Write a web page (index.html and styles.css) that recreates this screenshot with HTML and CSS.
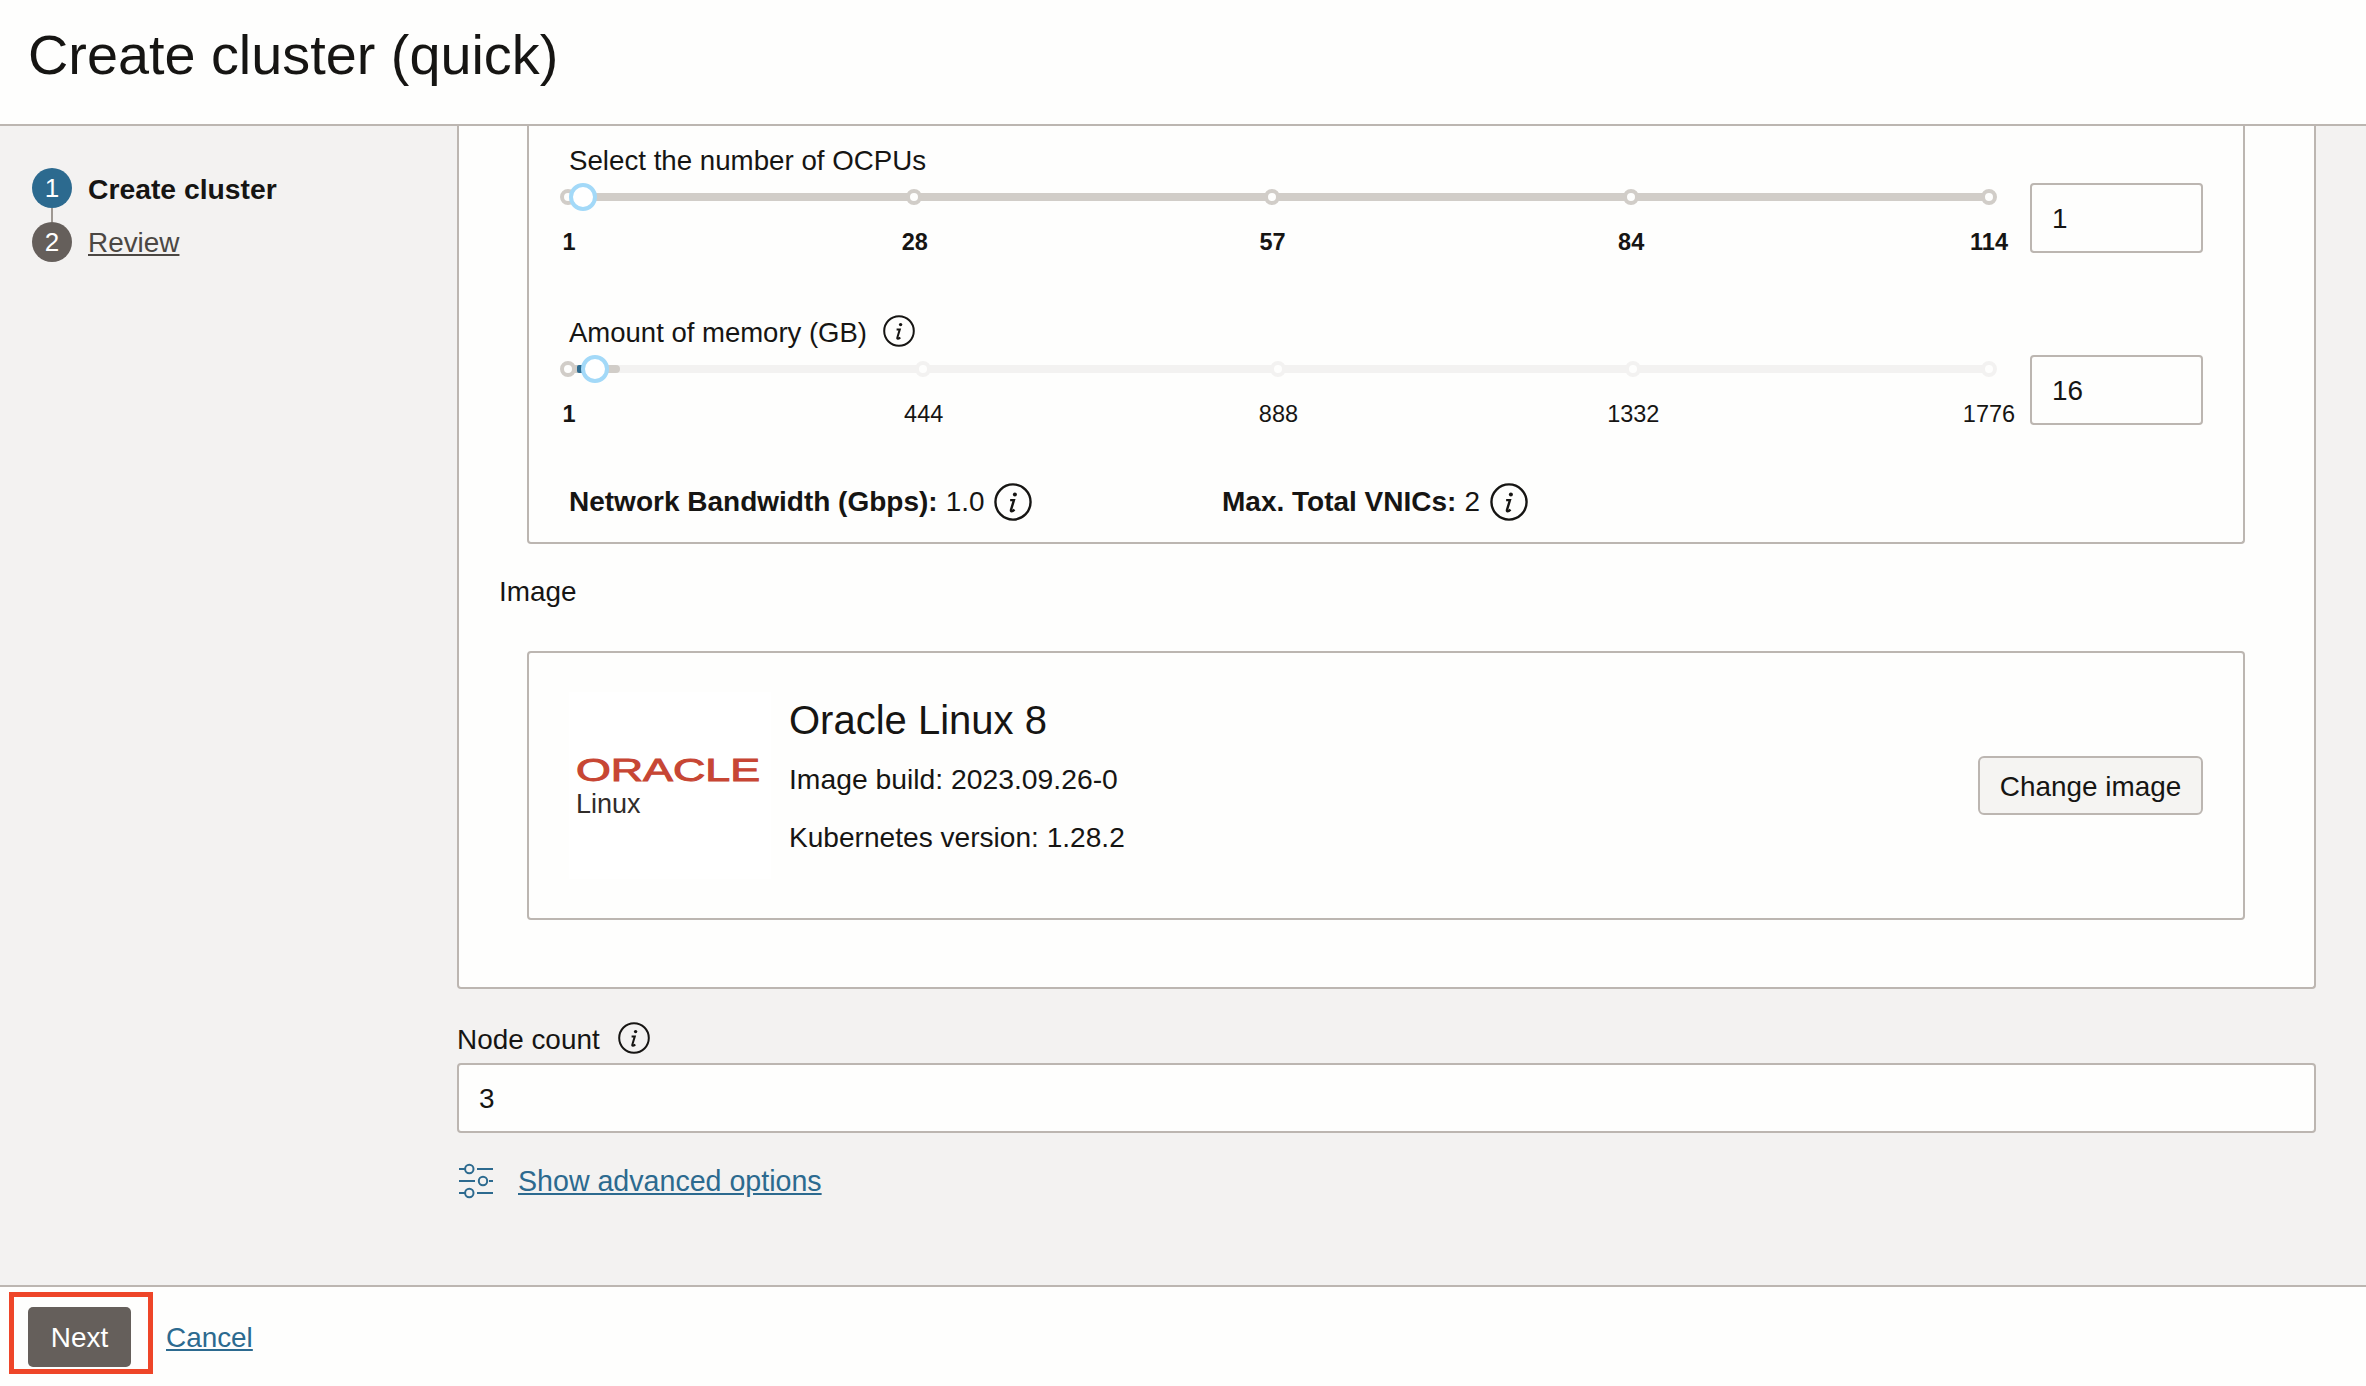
FILE: index.html
```html
<!DOCTYPE html>
<html lang="en">
<head>
  <meta charset="UTF-8">
  <meta name="viewport" content="width=device-width, initial-scale=1.0">
  <title>Create cluster (quick)</title>
  <link rel="stylesheet" href="styles.css">
</head>
<body>
  <svg class="icon-defs" aria-hidden="true">
    <symbol id="info" viewBox="0 0 32 32">
      <circle cx="16" cy="16" r="14.8" fill="none" stroke="currentColor" stroke-width="2"/>
      <circle cx="17.6" cy="9.6" r="1.7" fill="currentColor"/>
      <path d="M13.6 14.4h3.2l-2.5 8.3c-.4 1.4.9 1.6 3-.3" fill="none" stroke="currentColor" stroke-width="2"/>
    </symbol>
  </svg>

  <header class="page-header">
    <h1>Create cluster (quick)</h1>
  </header>

  <div class="page-body">
    <nav class="steps">
      <div class="step current">
        <span class="step-num">1</span>
        <span class="step-label">Create cluster</span>
      </div>
      <div class="step-line"></div>
      <div class="step">
        <span class="step-num">2</span>
        <a class="step-label" href="#">Review</a>
      </div>
    </nav>

    <main class="content">
      <section class="outer-panel">
        <div class="shape-panel">
          <div class="slider-row">
            <div>
              <div class="field-label">Select the number of OCPUs</div>
              <div class="track">
                <span class="dot" style="left: 0"></span>
                <span class="dot" style="left: 24.35%"></span>
                <span class="dot" style="left: 49.54%"></span>
                <span class="dot" style="left: 74.8%"></span>
                <span class="dot" style="left: 100%"></span>
                <span class="thumb" style="left: 1.06%"></span>
              </div>
              <div class="ticks">
                <span class="tick strong" style="left: 0">1</span>
                <span class="tick strong" style="left: 24.35%">28</span>
                <span class="tick strong" style="left: 49.54%">57</span>
                <span class="tick strong" style="left: 74.8%">84</span>
                <span class="tick strong" style="left: 100%">114</span>
              </div>
            </div>
            <input class="text-input num-input" value="1">
          </div>

          <div class="slider-row">
            <div>
              <div class="field-label memory-label">Amount of memory (GB) <svg class="info"><use href="#info"/></svg></div>
              <div class="track light">
                <span class="fill" style="width: 3.66%"></span>
                <span class="sliver"></span>
                <span class="dot on" style="left: 0"></span>
                <span class="dot" style="left: 24.98%"></span>
                <span class="dot" style="left: 49.96%"></span>
                <span class="dot" style="left: 74.95%"></span>
                <span class="dot" style="left: 100%"></span>
                <span class="thumb" style="left: 1.9%"></span>
              </div>
              <div class="ticks">
                <span class="tick strong" style="left: 0">1</span>
                <span class="tick" style="left: 24.98%">444</span>
                <span class="tick" style="left: 49.96%">888</span>
                <span class="tick" style="left: 74.95%">1332</span>
                <span class="tick" style="left: 100%">1776</span>
              </div>
            </div>
            <input class="text-input num-input" value="16">
          </div>

          <div class="stats">
            <div class="stat stat-first"><strong>Network Bandwidth (Gbps):</strong> 1.0 <svg class="info big"><use href="#info"/></svg></div>
            <div class="stat"><strong>Max. Total VNICs:</strong> 2 <svg class="info big"><use href="#info"/></svg></div>
          </div>
        </div>

        <div class="image-label">Image</div>

        <div class="image-panel">
          <div class="logo-box">
            <svg class="oracle-logo" viewBox="0 0 184 24">
              <text x="0" y="23.5" font-size="32" textLength="184" lengthAdjust="spacingAndGlyphs">ORACLE</text>
            </svg>
            <div class="logo-sub">Linux</div>
          </div>
          <div class="image-info">
            <div class="image-name">Oracle Linux 8</div>
            <div class="image-build">Image build: 2023.09.26-0</div>
            <div class="image-k8s">Kubernetes version: 1.28.2</div>
          </div>
          <button class="btn-secondary">Change image</button>
        </div>
      </section>

      <div class="field-label node-label">Node count <svg class="info"><use href="#info"/></svg></div>
      <input class="text-input wide-input" value="3">

      <div class="advanced">
        <svg class="sliders-icon" viewBox="9 13 34 36">
          <g fill="none" stroke="currentColor" stroke-width="2">
            <path d="M9 19h6M27 19h16M9 31h16M39 31h4M9 43h6M27 43h16"/>
            <circle cx="19.3" cy="19" r="4.2"/>
            <circle cx="33" cy="31" r="4.2"/>
            <circle cx="19.3" cy="43" r="4.2"/>
          </g>
        </svg>
        <a href="#">Show advanced options</a>
      </div>
    </main>
  </div>

  <footer class="page-footer">
    <button class="btn-primary">Next</button>
    <a class="cancel" href="#">Cancel</a>
    <div class="highlight"></div>
  </footer>
</body>
</html>
```

FILE: styles.css
```css
body {
  margin: 0;
  height: 1386px;
  overflow: hidden;
  display: flex;
  flex-direction: column;
  font-family: "Liberation Sans", Arial, sans-serif;
  font-size: 27.9px;
  line-height: 32px;
  color: #161513;
  background: #fefefd;
}
a {
  color: #2c6a8f;
}
.icon-defs {
  display: none;
}

/* header */
.page-header {
  height: 124px;
  flex: none;
  padding-left: 28px;
  border-bottom: 2px solid #bcb6b1;
}
h1 {
  margin: 0;
  font-size: 55.8px;
  font-weight: 400;
  line-height: 110px;
}

/* layout */
.page-body {
  flex: 1;
  display: flex;
  min-height: 0;
  background: #f3f2f1;
}
.steps {
  width: 457px;
  flex: none;
  box-sizing: border-box;
  padding: 42px 0 0 32px;
}
.step {
  display: flex;
  align-items: center;
  height: 40px;
}
.step-num {
  width: 40px;
  height: 40px;
  margin-right: 16px;
  border-radius: 50%;
  background: #655f5b;
  color: #fff;
  font-size: 26px;
  line-height: 40px;
  text-align: center;
}
.current .step-num {
  background: #2c6a8f;
}
.current .step-label {
  font-size: 28.3px;
  font-weight: 700;
}
.step-label {
  padding-top: 1px;
  color: #161513;
}
a.step-label {
  color: #4b4743;
}
.step-line {
  width: 2px;
  height: 14px;
  margin-left: 19px;
  background: #9e9892;
}
.content {
  flex: 1;
  padding-right: 50px;
  min-width: 0;
}

/* panels */
.outer-panel {
  height: 863px;
  box-sizing: border-box;
  padding: 0 69px 0 68px;
  background: #fefefd;
  border: 2px solid #bcb6b1;
  border-top: 0;
  border-radius: 0 0 4px 4px;
}
.shape-panel {
  height: 418px;
  box-sizing: border-box;
  padding: 17px 41px 0 39px;
  border: 2px solid #bcb6b1;
  border-top: 0;
  border-radius: 0 0 4px 4px;
}
.slider-row {
  display: grid;
  grid-template-columns: 1421px 173px;
  column-gap: 41px;
  height: 172px;
}
.field-label {
  display: flex;
  align-items: center;
  gap: 18px;
  height: 34px;
  margin-bottom: -2px;
  padding-left: 1px;
  box-sizing: border-box;
  padding-top: 1px;
  font-size: 27.7px;
}
.memory-label {
  gap: 16px;
  font-size: 27.5px;
}
.node-label {
  padding-left: 0;
  padding-top: 2px;
  font-size: 27.9px;
}
.info {
  width: 32px;
  height: 32px;
  flex: none;
  margin-top: -4px;
}
.info.big {
  width: 38px;
  height: 38px;
  margin: 0;
}

/* slider */
.track {
  position: relative;
  height: 8px;
  margin-top: 18px;
  background: #d1cdc8;
}
.track.light {
  background: #f3f2f1;
}
.fill {
  position: absolute;
  left: 0;
  top: 0;
  height: 8px;
  border-radius: 0 4px 4px 0;
  background: #d1cdc8;
}
.sliver {
  position: absolute;
  left: 9px;
  top: 0;
  width: 14px;
  height: 8px;
  border-radius: 2px 0 0 2px;
  background: #2c6a8f;
}
.dot {
  position: absolute;
  top: 50%;
  width: 16px;
  height: 16px;
  box-sizing: border-box;
  border: 4px solid #d1cdc8;
  border-radius: 50%;
  background: #fefefd;
  transform: translate(-50%, -50%);
}
.light .dot {
  border-color: #f3f2f1;
}
.light .dot.on {
  border-color: #d1cdc8;
}
.thumb {
  position: absolute;
  top: 50%;
  width: 28px;
  height: 28px;
  box-sizing: border-box;
  border: 4px solid #a3d9f8;
  border-radius: 50%;
  background: #fff;
  transform: translate(-50%, -50%);
}
.ticks {
  position: relative;
  height: 30px;
  margin: 26px 0 0 1px;
}
.tick {
  position: absolute;
  top: 0;
  font-size: 23.5px;
  line-height: 30px;
  transform: translateX(-50%);
}
.tick.strong {
  font-weight: 700;
}

/* inputs */
.text-input {
  display: block;
  box-sizing: border-box;
  height: 70px;
  padding: 2px 20px 0;
  background: #fefefd;
  border: 2px solid #bcb6b1;
  border-radius: 4px;
  font: inherit;
  color: inherit;
}
.num-input {
  width: 173px;
  margin-top: 40px;
}
.wide-input {
  width: 100%;
  margin-top: 9px;
}

.stats {
  display: flex;
  align-items: center;
  height: 38px;
  margin: -4px 0 0 1px;
}
.stat {
  display: flex;
  align-items: center;
  gap: 8px;
}
.stat-first {
  width: 653px;
}
.stat strong {
  font-size: 28px;
}
.stat .info {
  margin-left: 2px;
}

/* image */
.image-label {
  margin: 32px 0 43px -28px;
}
.image-panel {
  display: flex;
  align-items: center;
  height: 269px;
  box-sizing: border-box;
  padding: 0 40px 0 40px;
  border: 2px solid #bcb6b1;
  border-radius: 4px;
}
.logo-box {
  width: 202px;
  height: 187px;
  flex: none;
  box-sizing: border-box;
  margin-right: 18px;
  padding: 65px 0 0 7px;
  background: #fff;
}
.oracle-logo {
  display: block;
  width: 184px;
  height: 24px;
  overflow: visible;
  fill: #c74634;
  stroke: #c74634;
  stroke-width: 1;
}
.logo-sub {
  margin-top: 7px;
  font-size: 27px;
  color: #312d2a;
}
.image-info {
  flex: 1;
  margin-bottom: 20px;
}
.image-name {
  font-size: 40px;
  line-height: 44px;
}
.image-build {
  margin-top: 21px;
  font-size: 28.3px;
}
.image-k8s {
  margin-top: 27px;
  font-size: 28.1px;
}
.btn-secondary {
  width: 225px;
  height: 59px;
  padding: 2px 0 0;
  background: #f5f4f2;
  border: 2px solid #bcb6b1;
  border-radius: 6px;
  font: inherit;
  color: inherit;
}

/* below the panel */
.node-label {
  margin-top: 33px;
}
.advanced {
  display: flex;
  align-items: center;
  gap: 25px;
  margin: 30px 0 0 2px;
  font-size: 28.6px;
}
.sliders-icon {
  width: 34px;
  height: 36px;
  color: #2c6a8f;
}

/* footer */
.page-footer {
  position: relative;
  height: 99px;
  flex: none;
  display: flex;
  align-items: center;
  gap: 35px;
  padding-left: 28px;
  border-top: 2px solid #bcb6b1;
  background: #fefefd;
}
.btn-primary {
  width: 103px;
  height: 60px;
  padding: 2px 0 0;
  background: #655f5b;
  border: 0;
  border-radius: 5px;
  font: inherit;
  color: #fff;
}
.cancel {
  padding-top: 2px;
}
.highlight {
  position: absolute;
  left: 9px;
  top: 5px;
  width: 144px;
  height: 82px;
  box-sizing: border-box;
  border: 5px solid #ee4528;
}
```
